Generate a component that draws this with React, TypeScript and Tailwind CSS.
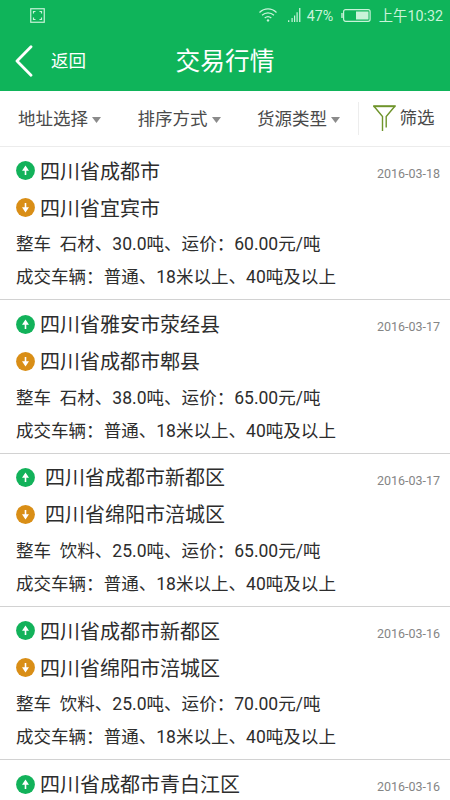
type Quote = {
  from: string;
  to?: string;
  date: string;
  cargo?: string;
  indent?: boolean;
};

const QUOTES: Quote[] = [
  { from: "四川省成都市", to: "四川省宜宾市", date: "2016-03-18", cargo: "石材、30.0吨、运价：60.00元/吨" },
  { from: "四川省雅安市荥经县", to: "四川省成都市郫县", date: "2016-03-17", cargo: "石材、38.0吨、运价：65.00元/吨" },
  { from: "四川省成都市新都区", to: "四川省绵阳市涪城区", date: "2016-03-17", cargo: "饮料、25.0吨、运价：65.00元/吨", indent: true },
  { from: "四川省成都市新都区", to: "四川省绵阳市涪城区", date: "2016-03-16", cargo: "饮料、25.0吨、运价：70.00元/吨" },
  { from: "四川省成都市青白江区", date: "2016-03-16" },
];

const FILTERS = ["地址选择", "排序方式", "货源类型"];

function StatusBar() {
  return (
    <div className="flex h-8 items-center pl-[30px] pr-[7px] text-[#c9f3d9]">
      <svg className="mb-px" width="15" height="15" viewBox="0 0 15 15" fill="none" stroke="currentColor">
        <rect x="0.75" y="0.75" width="13.5" height="13.5" strokeWidth="1.2" />
        <path d="M3.5 5.5v-2h2M9.5 3.5h2v2M11.5 9.5v2h-2M5.5 11.5h-2v-2" strokeWidth="1.2" />
      </svg>
      <svg className="ml-auto mb-[2px]" width="18" height="14" viewBox="0 0 18 14" fill="none" stroke="currentColor" strokeWidth="1.2">
        <path d="M0.5 4.5C5.5-.3 12.5-.3 17.5 4.5M3 7.3c3.5-3.2 8.500-3.200 12 0M5.700 10c2-1.800 4.600-1.800 6.600 0" />
        <circle cx="9" cy="12.400" r="1.200" fill="currentColor" stroke="none" />
      </svg>
      <svg className="ml-[11px] mb-[2px]" width="13" height="14" viewBox="0 0 13 14" fill="currentColor">
        <path d="M0 12.200h1.300V14H0zM3.500 10h1.200v4H3.500zM6 7.500h1.200V14H6zM8.500 4.300h1.200V14H8.500zM11.100 0h1.300v14h-1.300z" />
      </svg>
      <span className="ml-[6px] w-[28px] text-[14.3px] leading-none">47%</span>
      <svg className="ml-[6px] mb-px" width="30" height="13" viewBox="0 0 30 13" fill="none">
        <rect x="2.600" y="0.700" width="26.500" height="11.600" rx="2" stroke="currentColor" strokeWidth="1.200" />
        <path d="M1 4v5" stroke="currentColor" strokeWidth="1.400" />
        <rect x="15" y="2.500" width="12.500" height="8" fill="currentColor" />
      </svg>
      <span className="ml-[8px] whitespace-nowrap pt-px text-[14.3px] leading-none">上午10:32</span>
    </div>
  );
}

function TitleBar() {
  return (
    <div className="grid h-[59px] grid-cols-[1fr_auto_1fr] items-center pb-px text-white">
      <div className="flex items-center pl-[15px]">
        <svg width="18" height="32" viewBox="0 0 18 32" fill="none" stroke="currentColor" strokeWidth="2.8" strokeLinecap="round" strokeLinejoin="round">
          <path d="M16 1.800 2 16l14 14.200" />
        </svg>
        <span className="ml-[18px] pt-[2px] text-[17.5px] leading-none">返回</span>
      </div>
      <h1 className="pt-[2px] text-[24.7px] leading-none">交易行情</h1>
    </div>
  );
}

function FilterBar() {
  return (
    <div className="flex h-14 items-center border-b border-[#ececec] pl-[18px] text-[17.5px] leading-none text-[#4a4a4a]">
      {FILTERS.map((label) => (
        <div key={label} className="flex w-[119.5px] shrink-0 items-center gap-[4px] pt-[2px]">
          <span>{label}</span>
          <svg width="9" height="6" viewBox="0 0 9 6" fill="#8b8b8b">
            <path d="M0 0h9L4.500 6z" />
          </svg>
        </div>
      ))}
      <div className="-ml-[19px] flex h-[33px] items-center border-l border-[#ededed] pl-[14px]">
        <svg width="23" height="27" viewBox="0 0 23 27" fill="none" stroke="#6f942b" strokeWidth="1.4">
          <path d="M9.500 26V11.500L1 1.300h20.800L13.200 11.500V22.500" />
          <path d="M0.500 1.300h21.800" strokeWidth="1.800" />
        </svg>
        <span className="ml-[4px] pt-px">筛选</span>
      </div>
    </div>
  );
}

function Arrow({ down = false }: { down?: boolean }) {
  return (
    <svg className="shrink-0" width="19" height="19" viewBox="0 0 19 19">
      <circle cx="9.500" cy="9.500" r="9.400" fill={down ? "#d98e16" : "#12b25a"} />
      <path
        d="M9.500 4.600 13 9.700h-2.700v4.200H8.700V9.700H6z"
        fill="#fff"
        transform={down ? "rotate(180 9.500 9.500)" : undefined}
      />
    </svg>
  );
}

function QuoteRow({ quote }: { quote: Quote }) {
  const name = quote.indent ? "ml-[10px] pt-[2px]" : "ml-[5px] pt-[2px]";
  return (
    <li className="h-[153.3px] border-b border-[#d2d2d2] pl-4 pr-[10px] pt-[5.4px] text-[#2d2d2d]">
      <div className="flex h-[37px] items-center text-[20px] leading-none">
        <Arrow />
        <span className={name}>{quote.from}</span>
        <time className="ml-auto pt-[7px] text-[12.5px] text-[#858585]">{quote.date}</time>
      </div>
      {quote.to && (
        <div className="flex h-[37px] items-center text-[20px] leading-none">
          <Arrow down />
          <span className={name}>{quote.to}</span>
        </div>
      )}
      {quote.cargo && (
        <div className="whitespace-pre pt-[2px] text-[17.55px] leading-[33px]">
          <p>{"整车  " + quote.cargo}</p>
          <p>成交车辆：普通、18米以上、40吨及以上</p>
        </div>
      )}
    </li>
  );
}

export default function App() {
  return (
    <div
      lang="zh-CN"
      className="flex h-[800px] w-[450px] flex-col overflow-hidden bg-white font-['Roboto','Noto_Sans_CJK_SC',sans-serif]"
    >
      <header className="shrink-0 bg-[#0fb45a]">
        <StatusBar />
        <TitleBar />
      </header>
      <nav className="shrink-0">
        <FilterBar />
      </nav>
      <ul className="min-h-0 flex-1 overflow-hidden">
        {QUOTES.map((quote, i) => (
          <QuoteRow key={i} quote={quote} />
        ))}
      </ul>
    </div>
  );
}
